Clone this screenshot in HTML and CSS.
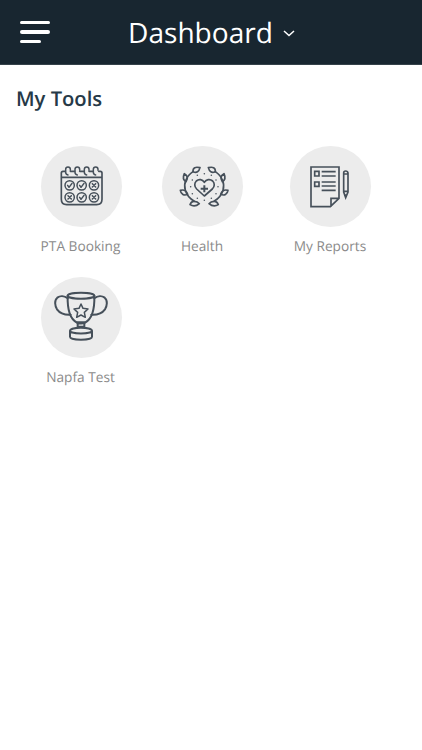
FILE: index.html
```html
<!DOCTYPE html>
<html lang="en">
<head>
    <meta charset="UTF-8">
    <meta name="viewport" content="width=device-width, initial-scale=1.0">
    <title>Dashboard</title>
    <link rel="stylesheet" href="styles.css">
</head>
<body>
    <header>
        <button class="menu-button" aria-label="Menu">
            <span></span>
            <span></span>
            <span class="short"></span>
        </button>
        <h1>Dashboard</h1>
        <svg class="chevron" viewBox="0 0 12 7"><path d="M1 1l5 4.5L11 1"/></svg>
    </header>
    <main>
        <h2>My Tools</h2>
        <div class="tools">
            <a class="tool">
                <svg class="icon" viewBox="14 13 243 243">
                    <defs>
                        <g id="yes"><circle r="14"/><path d="M-6 0l4 6L7-6"/></g>
                        <g id="no"><circle r="14"/><path d="M-5-5L5 5M5-5L-5 5"/></g>
                        <path id="ring" d="M8 3V0A7 7 0 0 0-6 0V9q0 7 7 8"/>
                    </defs>
                    <path d="M87 89H80q-5 0-5 5V173q0 16 16 16h90q16 0 16-16V94q0-5-5-5h-5M102 89h13M130 89h13M158 89h12M75 107h122"/>
                    <g class="thin">
                        <use href="#ring" x="94" y="83"/>
                        <use href="#ring" x="122" y="83"/>
                        <use href="#ring" x="150" y="83"/>
                        <use href="#ring" x="177" y="83"/>
                        <use href="#yes" x="100" y="131"/>
                        <use href="#yes" x="136" y="131"/>
                        <use href="#no" x="173" y="131"/>
                        <use href="#no" x="100" y="167"/>
                        <use href="#yes" x="136" y="167"/>
                        <use href="#no" x="173" y="167"/>
                    </g>
                </svg>
                <span>PTA Booking</span>
            </a>
            <a class="tool">
                <svg class="icon" viewBox="12 13 243 243">
                    <defs>
                        <g id="branch">
                            <path d="M105 90C84 104 76 126 82 146c4 14 13 25 27 33"/>
                            <path d="M105 90c-1-13 8-15 21-12-3 12-10 17-21 12z"/>
                            <path d="M84 120c-9-5-10-13-5-24 10 6 12 14 5 24z"/>
                            <path d="M89 158c-4-12-11-15-22-12 2 12 11 17 22 12z"/>
                            <path d="M109 179c-8-1-11 4-13 10 11 7 20 4 28-3-4-5-8-7-15-7z"/>
                        </g>
                    </defs>
                    <use href="#branch"/>
                    <use href="#branch" transform="matrix(-1 0 0 1 277 0)"/>
                    <path d="M139 163l-23-21c-8-8-7-18-1-24 8-7 18-5 24 4 6-9 17-11 25-4 6 6 7 16-1 24z"/>
                    <path class="plus" d="M139 131v21M128 141h22"/>
                    <g class="dots">
                        <circle cx="139" cy="96" r="2.3"/>
                        <circle cx="118" cy="101" r="2.3"/>
                        <circle cx="160" cy="101" r="2.3"/>
                        <circle cx="103" cy="115" r="2.3"/>
                        <circle cx="174" cy="115" r="2.3"/>
                        <circle cx="98" cy="135" r="2.3"/>
                        <circle cx="180" cy="135" r="2.3"/>
                        <circle cx="103" cy="156" r="2.3"/>
                        <circle cx="174" cy="156" r="2.3"/>
                        <circle cx="118" cy="170" r="2.3"/>
                        <circle cx="160" cy="170" r="2.3"/>
                        <circle cx="139" cy="176" r="2.3"/>
                    </g>
                </svg>
                <span>Health</span>
            </a>
            <a class="tool">
                <svg class="icon sharp" viewBox="13 13 243 243">
                    <path d="M76 76h84v94l-26 25H76zM136 195v-25h24"/>
                    <path d="M87 89h13v14H87zM87 121h13v13H87z"/>
                    <path d="M108 90h42M108 103h42M108 121h42M108 133h42M108 146h42"/>
                    <path d="M174 94q0-6 6-6t7 6v57l-7 17-6-17zM174 97h13M174 149h13M180 158v8"/>
                </svg>
                <span>My Reports</span>
            </a>
            <a class="tool">
                <svg class="icon trophy" viewBox="14 14 243 243">
                    <ellipse cx="134" cy="70" rx="40" ry="9"/>
                    <path d="M94 70c-1 35 3 67 27 80h26c24-13 28-45 27-80"/>
                    <path d="M94 78C84 70 71 70 63 76c-10 8-7 25-1 35 8 11 24 17 41 16"/>
                    <path d="M174 78c10-8 23-8 31-2 10 8 7 25 1 35-8 11-24 17-41 16"/>
                    <path class="thin" d="M134 95l6 13 15 2-11 10 3 15-13-7-13 7 3-15-11-10 15-2z"/>
                    <path d="M121 151q13 5 26 0M124 154v11M144 154v11M124 163h20"/>
                    <path d="M101 175c0-12 66-12 66 0v18c0 12-66 12-66 0zM101 175c0 11 66 11 66 0"/>
                </svg>
                <span>Napfa Test</span>
            </a>
        </div>
    </main>
</body>
</html>
```
FILE: styles.css
```css
body {
    font-family: 'Open Sans', sans-serif;
    background-color: white;
    margin: 0;
    text-rendering: geometricPrecision;
}

header {
    display: flex;
    align-items: center;
    box-sizing: border-box;
    height: 65px;
    padding-left: 20px;
    background-color: #182630;
    border-bottom: 1px solid #35424a;
}

.menu-button {
    display: flex;
    flex-direction: column;
    gap: 6px;
    width: 30px;
    padding: 0;
    border: none;
    background: none;
}

.menu-button span {
    width: 30px;
    height: 3.5px;
    border-radius: 2px;
    background-color: white;
}

.menu-button .short {
    width: 21px;
}

h1 {
    margin: 0 0 0 78px;
    padding-top: 2px;
    font-size: 28.1px;
    font-weight: 400;
    line-height: 40px;
    color: white;
}

.chevron {
    width: 12px;
    height: 7px;
    margin: 2px 0 0 10px;
    fill: none;
    stroke: white;
    stroke-width: 1.5;
}

h2 {
    margin: 0;
    padding: 19px 16px 0;
    font-size: 20.2px;
    font-weight: 600;
    line-height: 28px;
    color: #263947;
}

.tools {
    display: grid;
    grid-template-columns: 130px 113px 143px;
    grid-auto-rows: 130.5px;
    padding: 34px 16px 0;
}

.tool {
    display: flex;
    flex-direction: column;
    align-items: center;
    font-size: 13.7px;
    line-height: 20px;
    color: #8b8b8b;
}

.tool span {
    margin-top: 10px;
    margin-right: 1px;
}

.icon {
    width: 81px;
    height: 81px;
    border-radius: 50%;
    background-color: #ececec;
    fill: none;
    stroke: #46505a;
    stroke-width: 5;
    stroke-linecap: round;
    stroke-linejoin: round;
}

.sharp {
    stroke-linecap: butt;
    stroke-linejoin: miter;
}

.trophy {
    stroke-width: 6;
}

.thin {
    stroke-width: 4.5;
}

.plus {
    stroke-width: 6;
    stroke-linecap: butt;
}

.dots {
    fill: #46505a;
    stroke: none;
}
```
